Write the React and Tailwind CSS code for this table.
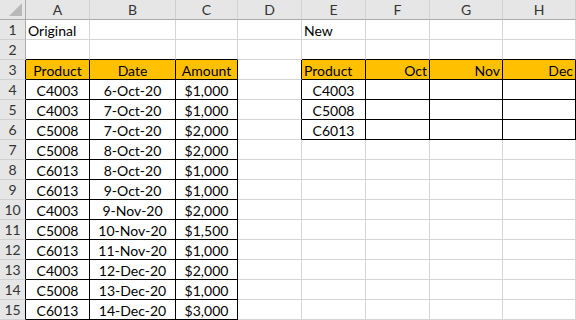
import React from "react";

const COLS = ["", "A", "B", "C", "D", "E", "F", "G", "H"];
const WIDTHS = "grid-cols-[26px_64px_86px_62px_64px_64px_64px_73px_1fr]";

const orders = [
  ["C4003", "6-Oct-20", "$1,000"],
  ["C4003", "7-Oct-20", "$1,000"],
  ["C5008", "7-Oct-20", "$2,000"],
  ["C5008", "8-Oct-20", "$2,000"],
  ["C6013", "8-Oct-20", "$1,000"],
  ["C6013", "9-Oct-20", "$1,000"],
  ["C4003", "9-Nov-20", "$2,000"],
  ["C5008", "10-Nov-20", "$1,500"],
  ["C6013", "11-Nov-20", "$1,000"],
  ["C4003", "12-Dec-20", "$2,000"],
  ["C5008", "13-Dec-20", "$1,000"],
  ["C6013", "14-Dec-20", "$3,000"],
];

// cell contents keyed "row,col": [text, align, filled]
const cells = {};
cells["1,1"] = ["Original", "left"];
cells["1,5"] = ["New", "left"];
cells["3,1"] = ["Product", "center", true];
cells["3,2"] = ["Date", "center", true];
cells["3,3"] = ["Amount", "center", true];
orders.forEach((o, i) => {
  cells[`${i + 4},1`] = [o[0], "center"];
  cells[`${i + 4},2`] = [o[1], "center"];
  cells[`${i + 4},3`] = [o[2], "center"];
});
cells["3,5"] = ["Product", "left", true];
cells["3,6"] = ["Oct", "right", true];
cells["3,7"] = ["Nov", "right", true];
cells["3,8"] = ["Dec", "right", true];
["C4003", "C5008", "C6013"].forEach((p, i) => {
  cells[`${i + 4},5`] = [p, "center"];
});

const inTable = (r, c) =>
  (r >= 3 && r <= 15 && c >= 1 && c <= 3) || (r >= 3 && r <= 6 && c >= 5 && c <= 8);

function Cell({ r, c }) {
  const isHeader = r === 0 || c === 0;
  const rightDark = inTable(r, c) || inTable(r, c + 1);
  const bottomDark = inTable(r, c) || inTable(r + 1, c);

  if (r === 0 && c === 0) {
    return (
      <div className="relative h-[20px] border-r border-b border-r-[#ababab] border-b-[#ababab] bg-[#e6e6e6]">
        <svg className="absolute right-[3px] bottom-[3px]" width="13" height="13" viewBox="0 0 13 13">
          <polygon points="13,0 13,13 0,13" fill="#b9b9b9" />
        </svg>
      </div>
    );
  }

  if (isHeader) {
    const rc = c === 0 ? (rightDark ? "border-r-black" : "border-r-[#ababab]") : "border-r-[#d0d0d0]";
    const bc = r === 0 ? "border-b-[#ababab]" : "border-b-[#d0d0d0]";
    return (
      <div
        className={`flex h-[20px] items-center justify-center border-r border-b pt-[1px] ${rc} ${bc} bg-[#e6e6e6] text-[14px] leading-none text-[#333]`}
      >
        {r === 0 ? COLS[c] : r}
      </div>
    );
  }

  const content = cells[`${r},${c}`];
  const filled = content && content[2];
  const align = content ? content[1] : "left";
  const just =
    align === "center" ? "justify-center" : align === "right" ? "justify-end" : "justify-start";
  return (
    <div
      className={`flex h-[20px] items-center overflow-visible whitespace-nowrap border-r border-b px-[2px] pt-[2px] text-[14px] leading-none text-black ${just} ${
        rightDark ? "border-r-black" : "border-r-[#d4d4d4]"
      } ${bottomDark ? "border-b-black" : "border-b-[#d4d4d4]"} ${filled ? "bg-[#ffc000]" : "bg-white"}`}
    >
      {content ? content[0] : ""}
    </div>
  );
}

export default function App() {
  const rows = Array.from({ length: 16 }, (_, r) => r);
  return (
    <div
      className={`grid h-[320px] w-[576px] overflow-hidden bg-white ${WIDTHS} auto-rows-[20px]`}
      style={{ fontFamily: "Lato, 'Open Sans', sans-serif" }}
    >
      {rows.map((r) =>
        COLS.map((_, c) => <Cell key={`${r}-${c}`} r={r} c={c} />)
      )}
    </div>
  );
}
